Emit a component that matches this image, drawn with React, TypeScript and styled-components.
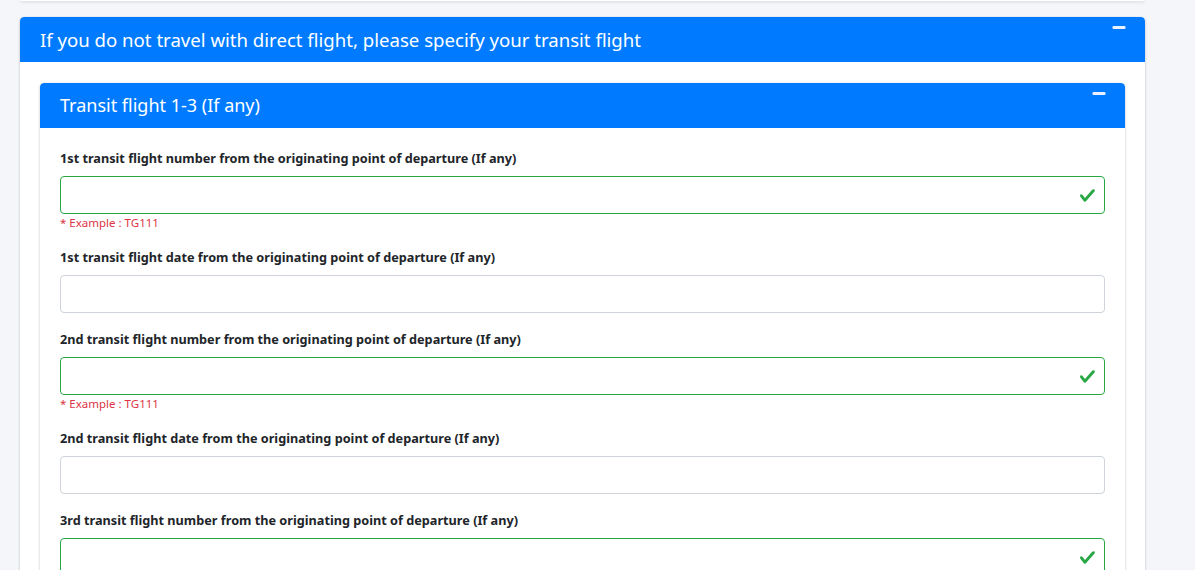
import React from "react";
import styled, { createGlobalStyle } from "styled-components";

const GlobalStyle = createGlobalStyle`
  body {
    margin: 0;
    background: #f4f6f9;
    font-family: "Noto Sans", "Liberation Sans", sans-serif;
    color: #212529;
  }
`;

const Page = styled.div`
  width: 1125px;
  margin-left: 20px;
`;

const PrevCard = styled.div`
  height: 1px;
  background: #ffffff;
  border-radius: 0 0 4px 4px;
  box-shadow: 0 0 1px rgba(0, 0, 0, 0.125), 0 1px 3px rgba(0, 0, 0, 0.2);
  margin-bottom: 16px;
`;

const Card = styled.div`
  background: #ffffff;
  border-radius: 4px;
  box-shadow: 0 0 1px rgba(0, 0, 0, 0.125), 0 1px 3px rgba(0, 0, 0, 0.2);
  overflow: hidden;
`;

const CardHeader = styled.div`
  display: flex;
  justify-content: space-between;
  align-items: flex-start;
  background: #007bff;
  color: #ffffff;
  padding: 12px 20px;
  border-radius: 4px 4px 0 0;
`;

const CardTitle = styled.h3<{ $size: number }>`
  margin: 0;
  font-size: ${(p) => p.$size}px;
  font-weight: 400;
  line-height: 21px;
`;

const ToolButton = styled.button`
  border: 0;
  background: transparent;
  padding: 0;
  margin: -6px -1px 0 0;
  width: 14px;
  height: 14px;
  display: flex;
  align-items: flex-start;
  cursor: pointer;
`;

const CardBody = styled.div<{ $top?: number }>`
  padding: ${(p) => p.$top ?? 20}px 20px 20px;
`;

const FormGroup = styled.div`
  margin-bottom: 16px;
`;

const Label = styled.label`
  display: block;
  font-size: 12.7px;
  font-weight: 700;
  line-height: 20px;
  margin-bottom: 8px;
`;

const InputWrap = styled.div`
  position: relative;
`;

const Input = styled.input<{ $valid?: boolean }>`
  display: block;
  box-sizing: border-box;
  width: 100%;
  height: 38px;
  padding: 6px 12px;
  font-size: 15px;
  font-family: inherit;
  border: 1px solid ${(p) => (p.$valid ? "#28a745" : "#ced4da")};
  border-radius: 4px;
  background: #ffffff;
  outline: none;
`;

const ValidIcon = styled.svg`
  position: absolute;
  right: 9px;
  top: 11px;
  width: 17px;
  height: 17px;
`;

const Hint = styled.div`
  font-size: 11.5px;
  line-height: 17px;
  color: #dc3545;
`;

function Minus() {
  return (
    <ToolButton aria-label="collapse">
      <svg width="14" height="14" viewBox="0 0 14 14">
        <rect x="0.5" y="3" width="13" height="3" rx="1" fill="#e8f1ff" />
      </svg>
    </ToolButton>
  );
}

type Field = { label: string; valid?: boolean; hint?: string };

const fields: Field[] = [
  {
    label: "1st transit flight number from the originating point of departure (If any)",
    valid: true,
    hint: "* Example : TG111",
  },
  { label: "1st transit flight date from the originating point of departure (If any)" },
  {
    label: "2nd transit flight number from the originating point of departure (If any)",
    valid: true,
    hint: "* Example : TG111",
  },
  { label: "2nd transit flight date from the originating point of departure (If any)" },
  {
    label: "3rd transit flight number from the originating point of departure (If any)",
    valid: true,
    hint: "* Example : TG111",
  },
  { label: "3rd transit flight date from the originating point of departure (If any)" },
];

function FormField({ label, valid, hint }: Field) {
  return (
    <FormGroup>
      <Label>{label}</Label>
      <InputWrap>
        <Input type="text" $valid={valid} />
        {valid && (
          <ValidIcon viewBox="0 0 8 8">
            <path
              fill="#28a745"
              d="M2.3 6.73L.6 4.53c-.4-1.04.46-1.4 1.1-.8l1.1 1.4 3.4-3.8c.6-.63 1.6-.27 1.2.7l-4 4.6c-.43.5-.8.4-1.1.1z"
            />
          </ValidIcon>
        )}
      </InputWrap>
      {hint && <Hint>{hint}</Hint>}
    </FormGroup>
  );
}

export default function App() {
  return (
    <>
      <GlobalStyle />
      <Page>
        <PrevCard />
        <Card>
          <CardHeader>
            <CardTitle $size={18.6}>
              If you do not travel with direct flight, please specify your transit flight
            </CardTitle>
            <Minus />
          </CardHeader>
          <CardBody $top={21}>
            <Card>
              <CardHeader>
                <CardTitle $size={18}>Transit flight 1-3 (If any)</CardTitle>
                <Minus />
              </CardHeader>
              <CardBody>
                {fields.map((f) => (
                  <FormField key={f.label} {...f} />
                ))}
              </CardBody>
            </Card>
          </CardBody>
        </Card>
      </Page>
    </>
  );
}
